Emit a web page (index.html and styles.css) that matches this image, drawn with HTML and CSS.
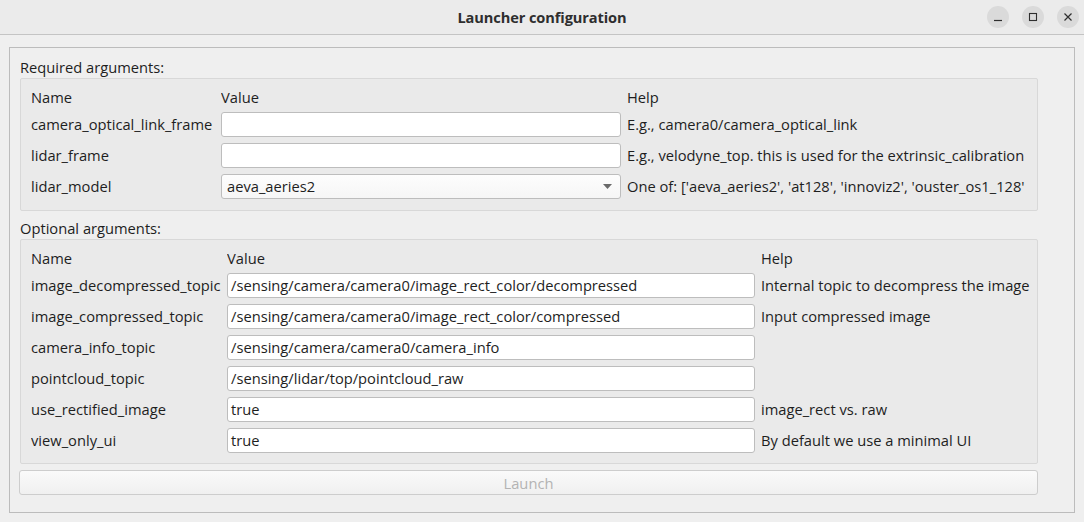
FILE: index.html
```html
<!DOCTYPE html>
<html>
<head>
<meta charset="utf-8">
<link rel="stylesheet" href="styles.css">
</head>
<body>
<div class="window">
  <header class="titlebar">
    <div class="title">Launcher configuration</div>
    <div class="wbuttons">
      <span class="wbtn"><svg width="10" height="10" viewBox="0 0 10 10"><path d="M1 8.5H9" stroke="#2e2e2e" stroke-width="1.2"/></svg></span>
      <span class="wbtn"><svg width="10" height="10" viewBox="0 0 10 10"><rect x="1.5" y="1.5" width="7" height="7" fill="none" stroke="#2e2e2e" stroke-width="1.1"/></svg></span>
      <span class="wbtn"><svg width="10" height="10" viewBox="0 0 10 10"><path d="M1.5 1.5L8.5 8.5M8.5 1.5L1.5 8.5" stroke="#2e2e2e" stroke-width="1.2"/></svg></span>
    </div>
  </header>
  <main class="content">
    <div class="frame">
      <div class="inner">
        <div class="section-label first">Required arguments:</div>
        <div class="group required">
          <div class="hdr">Name</div><div class="hdr">Value</div><div class="hdr">Help</div>

          <div class="name">camera_optical_link_frame</div>
          <div class="field"></div>
          <div class="help">E.g., camera0/camera_optical_link</div>

          <div class="name">lidar_frame</div>
          <div class="field"></div>
          <div class="help">E.g., velodyne_top. this is used for the extrinsic_calibration</div>

          <div class="name">lidar_model</div>
          <div class="field combo"><span>aeva_aeries2</span><svg width="9" height="5" viewBox="0 0 9 5"><path d="M0 0H9L4.5 5Z" fill="#6a6a6a"/></svg></div>
          <div class="help">One of: ['aeva_aeries2', 'at128', 'innoviz2', 'ouster_os1_128'</div>
        </div>

        <div class="section-label">Optional arguments:</div>
        <div class="group optional">
          <div class="hdr">Name</div><div class="hdr">Value</div><div class="hdr">Help</div>

          <div class="name">image_decompressed_topic</div>
          <div class="field">/sensing/camera/camera0/image_rect_color/decompressed</div>
          <div class="help">Internal topic to decompress the image</div>

          <div class="name">image_compressed_topic</div>
          <div class="field">/sensing/camera/camera0/image_rect_color/compressed</div>
          <div class="help">Input compressed image</div>

          <div class="name">camera_info_topic</div>
          <div class="field">/sensing/camera/camera0/camera_info</div>
          <div class="help"></div>

          <div class="name">pointcloud_topic</div>
          <div class="field">/sensing/lidar/top/pointcloud_raw</div>
          <div class="help"></div>

          <div class="name">use_rectified_image</div>
          <div class="field">true</div>
          <div class="help">image_rect vs. raw</div>

          <div class="name">view_only_ui</div>
          <div class="field">true</div>
          <div class="help">By default we use a minimal UI</div>
        </div>

        <button class="launch" disabled>Launch</button>
      </div>
    </div>
  </main>
</div>
</body>
</html>
```

FILE: styles.css
```css
* { box-sizing: border-box; }
html, body {
  margin: 0;
  padding: 0;
  width: 1084px;
  height: 522px;
  overflow: hidden;
  background: #efefef;
  font-family: "Open Sans", "Noto Sans", sans-serif;
  font-size: 14.7px;
  color: #1e1e1e;
}
.window {
  width: 1084px;
  height: 522px;
  display: flex;
  flex-direction: column;
}
.titlebar {
  height: 35px;
  flex: none;
  background: #ebebeb;
  border-bottom: 1px solid #c4c4c4;
  display: flex;
  align-items: center;
  justify-content: center;
  position: relative;
}
.title {
  font-weight: bold;
  font-size: 14.6px;
  color: #2e2e2e;
  letter-spacing: -0.1px;
}
.wbuttons {
  position: absolute;
  right: 5px;
  top: 6px;
  display: flex;
  gap: 13px;
}
.wbtn {
  width: 22px;
  height: 22px;
  border-radius: 50%;
  background: #dadada;
  display: flex;
  align-items: center;
  justify-content: center;
}
.content {
  flex: 1;
  padding: 12px 9px 9px 9px;
}
.frame {
  height: 466px;
  border: 1px solid #bcbcbc;
  padding: 0 36px 0 10px;
}
.inner {
  display: flex;
  flex-direction: column;
}
.section-label {
  height: 20px;
  line-height: 20px;
  margin: 7px 0 1px 0;
  white-space: nowrap;
}
.section-label.first { margin-top: 9px; }
.group {
  border: 1px solid #d8d8d8;
  border-radius: 2px;
  background: #eaeaea;
  display: grid;
  row-gap: 6px;
  column-gap: 6px;
  padding: 9px 11px 10px 10px;
  align-items: center;
}
.required {
  grid-template-columns: 184px 400px minmax(0, 1fr);
  grid-template-rows: 18px repeat(3, 25px);
  padding-bottom: 11px;
}
.optional {
  grid-template-columns: 190px 528px minmax(0, 1fr);
  grid-template-rows: 18px repeat(6, 25px);
}
.hdr, .name, .help {
  white-space: nowrap;
  line-height: 19px;
}
.hdr, .name { overflow: hidden; }
.field {
  height: 25px;
  background: #ffffff;
  border: 1px solid #bdbdbd;
  border-radius: 3px;
  padding: 0 3px;
  line-height: 23px;
  white-space: nowrap;
  overflow: hidden;
}
.combo {
  display: flex;
  align-items: center;
  justify-content: space-between;
  padding: 0 8px 0 5px;
  background: linear-gradient(#fdfdfd, #f6f6f6);
}
.launch {
  margin-top: 6px;
  margin-left: -1px;
  height: 25px;
  border: 1px solid #cdcdcd;
  border-radius: 3px;
  background: linear-gradient(#fafafa, #f0f0f0);
  color: #b3b3b3;
  font-family: inherit;
  font-size: 14.7px;
  padding: 0;
}
```
